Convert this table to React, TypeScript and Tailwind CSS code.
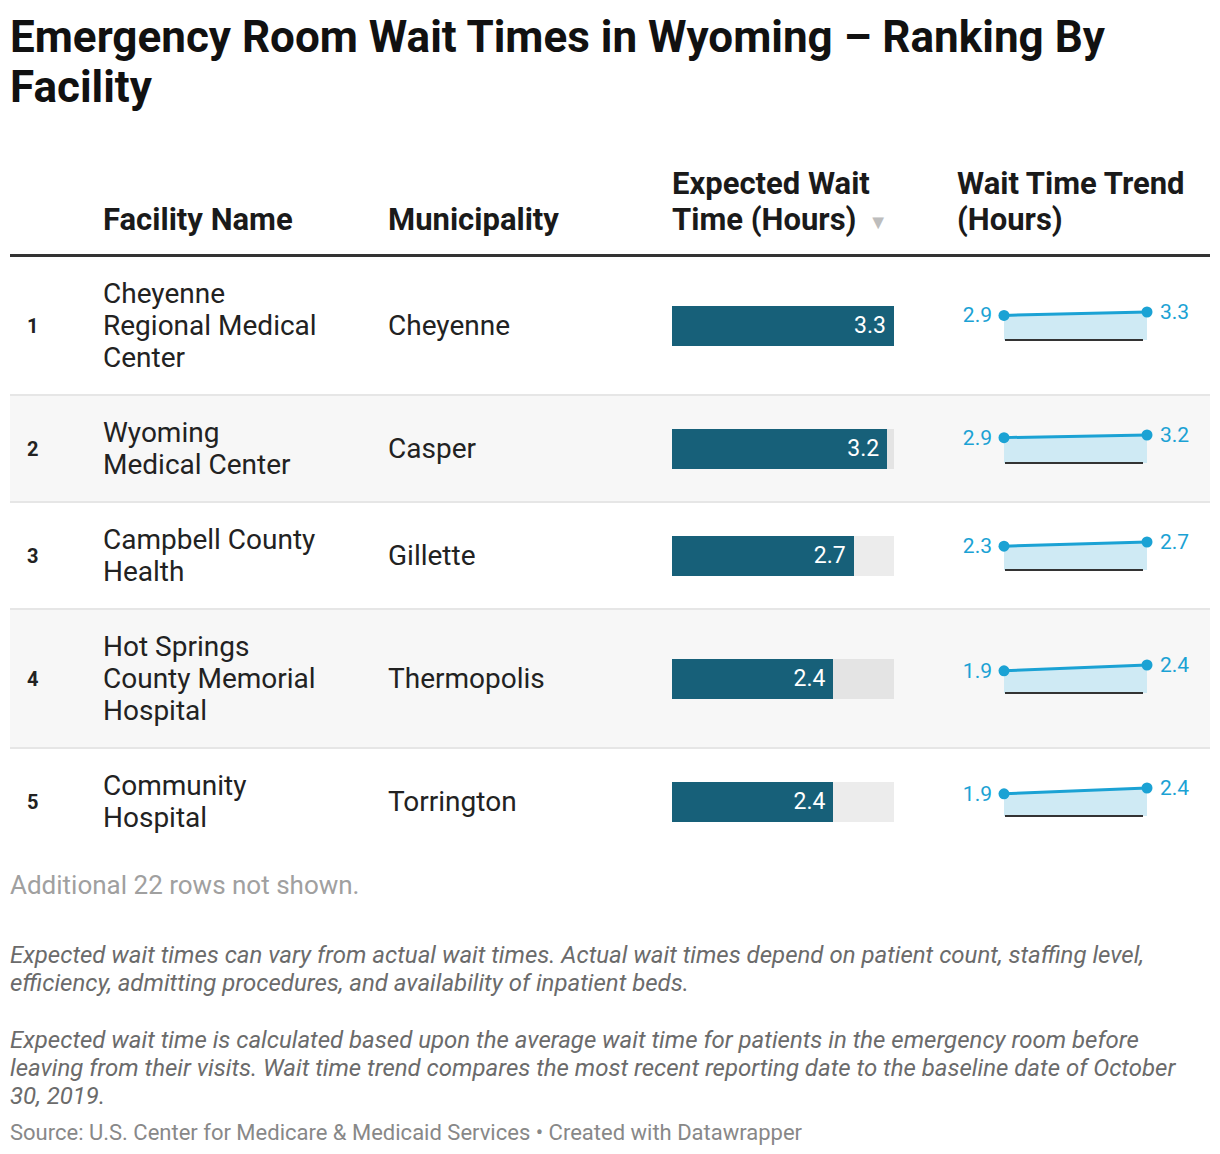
import React from "react";

type Row = {
  rank: number;
  name: string[];
  city: string;
  wait: number;
  from: number;
  to: number;
  shaded: boolean;
};

const rows: Row[] = [
  { rank: 1, name: ["Cheyenne", "Regional Medical", "Center"], city: "Cheyenne", wait: 3.3, from: 2.9, to: 3.3, shaded: false },
  { rank: 2, name: ["Wyoming", "Medical Center"], city: "Casper", wait: 3.2, from: 2.9, to: 3.2, shaded: true },
  { rank: 3, name: ["Campbell County", "Health"], city: "Gillette", wait: 2.7, from: 2.3, to: 2.7, shaded: false },
  { rank: 4, name: ["Hot Springs", "County Memorial", "Hospital"], city: "Thermopolis", wait: 2.4, from: 1.9, to: 2.4, shaded: true },
  { rank: 5, name: ["Community", "Hospital"], city: "Torrington", wait: 2.4, from: 1.9, to: 2.4, shaded: false },
];

const MAX = 3.3;

const Trend = ({ from, to }: { from: number; to: number }) => {
  const max = Math.max(from, to);
  const base = 46;
  const y1 = base - (28 * from) / max;
  const y2 = base - (28 * to) / max;
  const x1 = 47;
  const x2 = 190;
  return (
    <svg width="253" height="64" viewBox="0 0 253 64" className="block">
      <polygon points={`${x1},${y1} ${x2},${y2} ${x2},${base} ${x1},${base}`} fill="#cfeaf4" />
      <line x1="48" y1={base} x2="186" y2={base} stroke="#333" strokeWidth="2" />
      <line x1={x1} y1={y1} x2={x2} y2={y2} stroke="#1ba2d4" strokeWidth="3" />
      <circle cx={x1} cy={y1} r="5.5" fill="#1ba2d4" />
      <circle cx={x2} cy={y2} r="5.5" fill="#1ba2d4" />
      <text x="35" y={y1} textAnchor="end" dominantBaseline="central" fill="#1ba2d4" fontSize="21" fontFamily="Roboto">
        {from.toFixed(1)}
      </text>
      <text x="203" y={y2} dominantBaseline="central" fill="#1ba2d4" fontSize="21" fontFamily="Roboto">
        {to.toFixed(1)}
      </text>
    </svg>
  );
};

export default function App() {
  return (
    <div className="w-[1220px] bg-white px-[10px] pt-[12px] pb-4 font-['Roboto',sans-serif] text-[#222]">
      <h1 className="text-[44px] font-bold leading-[50px] text-[#111]">
        Emergency Room Wait Times in Wyoming – Ranking By Facility
      </h1>

      <div className="mt-[54px] w-[1200px]">
        <div className="grid grid-cols-[93px_285px_284px_285px_1fr] items-end border-b-[3px] border-[#333] pb-4 text-[31px] font-bold leading-[36px] text-[#1a1a1a]">
          <div />
          <div>Facility Name</div>
          <div>Municipality</div>
          <div>
            Expected Wait
            <br />
            Time (Hours) <span className="ml-1 inline-block align-middle text-[20px] leading-none text-[#bdbdbd]">▼</span>
          </div>
          <div>
            Wait Time Trend
            <br />
            (Hours)
          </div>
        </div>

        {rows.map((r, i) => (
          <div
            key={r.rank}
            className={`grid grid-cols-[93px_285px_284px_285px_1fr] items-center pt-[21px] pb-5 text-[28px] leading-[32px] ${
              r.shaded ? "bg-[#f7f7f7]" : "bg-white"
            } ${i < rows.length - 1 ? "border-b-2 border-[#e6e6e6]" : ""}`}
          >
            <div className="pl-[17px] text-[20px] font-bold text-[#222]">{r.rank}</div>
            <div>
              {r.name.map((n) => (
                <div key={n}>{n}</div>
              ))}
            </div>
            <div>{r.city}</div>
            <div className="h-10 w-[222px] bg-black/[0.075]">
              <div
                className="flex h-10 items-center justify-end bg-[#176079] pr-2 text-[23px] text-white"
                style={{ width: `${(r.wait / MAX) * 222}px` }}
              >
                {r.wait.toFixed(1)}
              </div>
            </div>
            <div>
              <Trend from={r.from} to={r.to} />
            </div>
          </div>
        ))}
      </div>

      <p className="mt-[16px] text-[26px] leading-[30px] text-[#a0a0a0]">Additional 22 rows not shown.</p>

      <p className="mt-[41px] text-[24px] italic leading-[28px] text-[#6b6b6b]">
        Expected wait times can vary from actual wait times. Actual wait times depend on patient count, staffing level,
        efficiency, admitting procedures, and availability of inpatient beds.
      </p>
      <p className="mt-[29px] text-[24px] italic leading-[28px] text-[#6b6b6b]">
        Expected wait time is calculated based upon the average wait time for patients in the emergency room before
        leaving from their visits. Wait time trend compares the most recent reporting date to the baseline date of
        October 30, 2019.
      </p>
      <p className="mt-[11px] text-[22px] leading-[24px] text-[#888]">
        Source: U.S. Center for Medicare &amp; Medicaid Services • Created with Datawrapper
      </p>
    </div>
  );
}
